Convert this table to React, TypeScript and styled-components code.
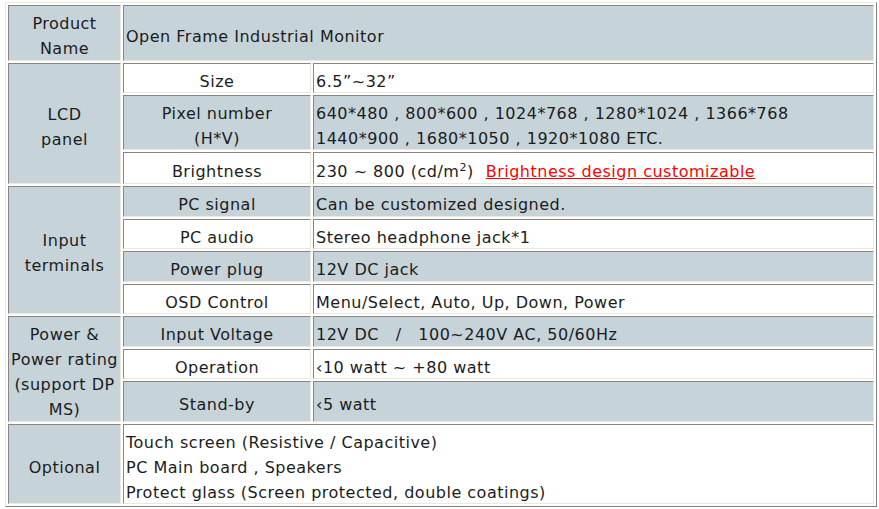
import React from "react";
import styled, { createGlobalStyle } from "styled-components";

const GlobalStyle = createGlobalStyle`
    html, body {
        margin: 0;
        padding: 0;
        background: #ffffff;
    }
`

const Page = styled.div`
    padding: 2px 0 0 5px;
    font-family: "DejaVu Sans", Verdana, sans-serif;
    font-size: 16px;
    line-height: 25px;
    letter-spacing: 0.5px;
    color: #1c1c1c;
`

const SpecTable = styled.table`
    border-collapse: separate;
    border-spacing: 2px;
    border-top: 1px solid #ece9dc;
    border-left: 1px solid #ece9dc;
    border-bottom: 1px solid #808080;
    border-right: 1px solid #808080;
    width: 872px;
    table-layout: fixed;
`

interface CellProps {
    $tone?: "blue" | "white";
    $align?: "left" | "center";
    $h?: number;
}

const Td = styled.td<CellProps>`
    box-sizing: border-box;
    background: ${({ $tone }) => ($tone === "white" ? "#ffffff" : "#c6d3d8")};
    text-align: ${({ $align }) => $align || "center"};
    vertical-align: middle;
    padding: 0 2px;
    height: ${({ $h }) => ($h ? `${$h}px` : "auto")};
    border-top: 1px solid #868686;
    border-left: 1px solid #868686;
    border-bottom: 1px solid #ece9dc;
    border-right: 1px solid #ece9dc;
`

// text sits a little low in its cell, like Verdana does
const CellText = styled.div`
    white-space: pre-wrap;
    padding-top: 3px;
    margin-bottom: -3px;
`

const Red = styled.a`
    color: #ff0000;
    text-decoration: underline;
    margin-left: 12px;
`

const Sup = styled.sup`
    font-size: 11px;
    line-height: 0;
`

interface Props extends CellProps {
    children: React.ReactNode;
    rowSpan?: number;
    colSpan?: number;
}

function Cell({ children, rowSpan, colSpan, $tone, $align, $h }: Props): JSX.Element {
    return (
        <Td rowSpan={rowSpan} colSpan={colSpan} $tone={$tone} $align={$align} $h={$h}>
            <CellText>{children}</CellText>
        </Td>
    )
}

type Row = { label: string; value: React.ReactNode; h: number };

const lcd: Row[] = [
    { label: "Size", value: "6.5\u201d~32\u201d", h: 30 },
    {
        label: "Pixel number\n(H*V)",
        value: "640*480 , 800*600 , 1024*768 , 1280*1024 , 1366*768\n1440*900 , 1680*1050 , 1920*1080 ETC.",
        h: 55,
    },
    {
        label: "Brightness",
        value: (
            <>
                230 ~ 800 (cd/m<Sup>2</Sup>)<Red href="#">Brightness design customizable</Red>
            </>
        ),
        h: 32,
    },
];

const input: Row[] = [
    { label: "PC signal", value: "Can be customized designed.", h: 31 },
    { label: "PC audio", value: "Stereo headphone jack*1", h: 30 },
    { label: "Power plug", value: "12V DC jack", h: 31 },
    { label: "OSD Control", value: "Menu/Select, Auto, Up, Down, Power", h: 30 },
];

const power: Row[] = [
    { label: "Input Voltage", value: "12V DC   /   100~240V AC, 50/60Hz", h: 31 },
    { label: "Operation", value: "\u203910 watt ~ +80 watt", h: 30 },
    { label: "Stand-by", value: "\u20395 watt", h: 41 },
];

// stripes run on across groups: white, blue, white...
function Group({ title, rows, start }: { title: string; rows: Row[]; start: number }) {
    return (
        <>
            {rows.map((r, i) => {
                const tone = (start + i) % 2 === 0 ? "white" : "blue";
                return (
                    <tr key={r.label}>
                        {i === 0 ? <Cell rowSpan={rows.length}>{title}</Cell> : null}
                        <Cell $tone={tone} $h={r.h}>{r.label}</Cell>
                        <Cell $tone={tone} $align="left">{r.value}</Cell>
                    </tr>
                );
            })}
        </>
    );
}

export default function App(): JSX.Element {
    return (
        <Page>
            <GlobalStyle />
            <SpecTable>
                <colgroup>
                    <col style={{ width: 113 }} />
                    <col style={{ width: 188 }} />
                    <col />
                </colgroup>
                <tbody>
                    <tr>
                        <Cell $h={56}>{"Product\nName"}</Cell>
                        <Cell colSpan={2} $align="left">Open Frame Industrial Monitor</Cell>
                    </tr>
                    <Group title={"LCD\npanel"} rows={lcd} start={0} />
                    <Group title={"Input\nterminals"} rows={input} start={1} />
                    <Group title={"Power &\nPower rating\n(support DP\nMS)"} rows={power} start={1} />
                    <tr>
                        <Cell $h={80}>Optional</Cell>
                        <Cell colSpan={2} $tone="white" $align="left">
                            {"Touch screen (Resistive / Capacitive)\nPC Main board , Speakers\nProtect glass (Screen protected, double coatings)"}
                        </Cell>
                    </tr>
                </tbody>
            </SpecTable>
        </Page>
    );
}
